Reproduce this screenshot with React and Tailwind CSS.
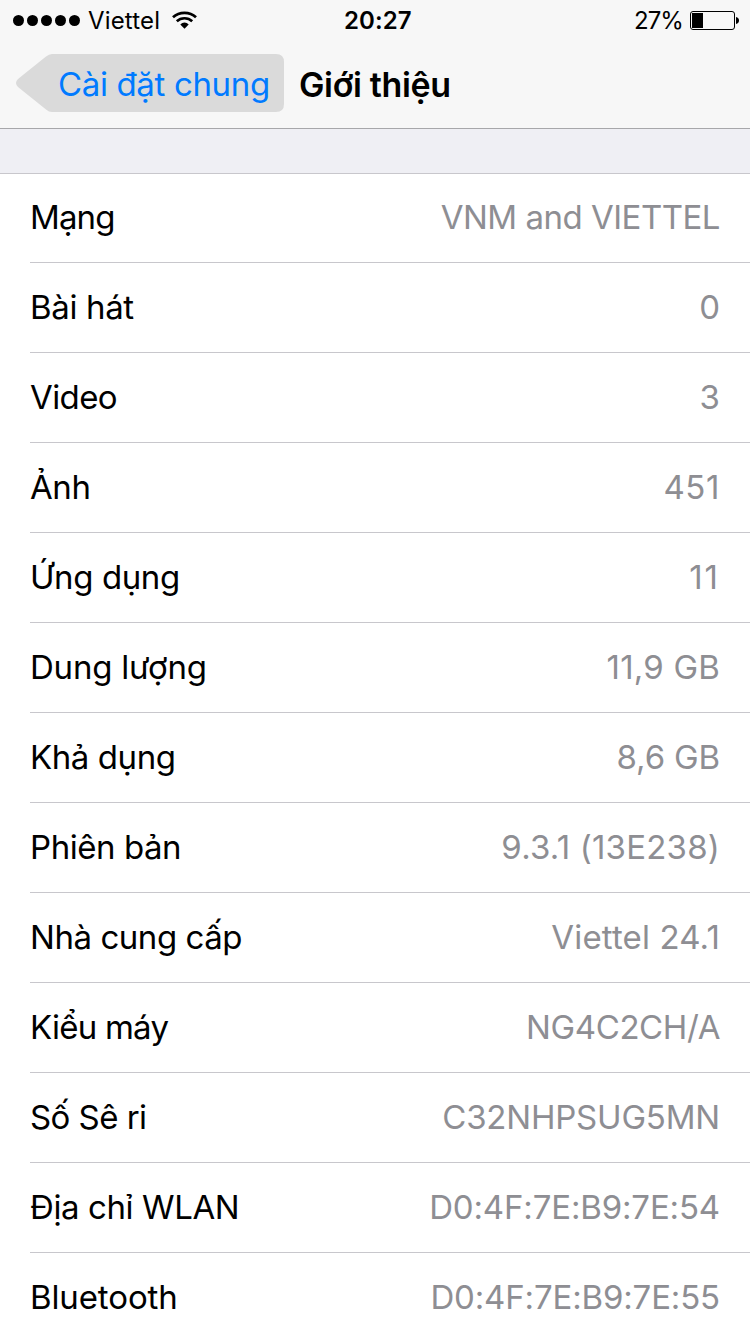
import React from 'react';

// letter spacing is tuned per row, the widths of Inter differ a little
const rows = [
  { label: 'Mạng', value: 'VNM and VIETTEL', labelSpacing: 'tracking-[-0.9px]', valueSpacing: 'tracking-[-0.5px]' },
  { label: 'Bài hát', value: '0', labelSpacing: 'tracking-[-0.35px]', valueSpacing: 'tracking-normal' },
  { label: 'Video', value: '3', labelSpacing: 'tracking-[-0.6px]', valueSpacing: 'tracking-normal' },
  { label: 'Ảnh', value: '451', labelSpacing: 'tracking-[-0.4px]', valueSpacing: 'tracking-[0.6px]' },
  { label: 'Ứng dụng', value: '11', labelSpacing: 'tracking-[-0.4px]', valueSpacing: 'tracking-[2px]' },
  { label: 'Dung lượng', value: '11,9 GB', labelSpacing: 'tracking-[-0.22px]', valueSpacing: 'tracking-[0.2px]' },
  { label: 'Khả dụng', value: '8,6 GB', labelSpacing: 'tracking-[-0.42px]', valueSpacing: 'tracking-[-0.15px]' },
  { label: 'Phiên bản', value: '9.3.1 (13E238)', labelSpacing: 'tracking-[-0.45px]', valueSpacing: 'tracking-[0.2px]' },
  { label: 'Nhà cung cấp', value: 'Viettel 24.1', labelSpacing: 'tracking-[-0.45px]', valueSpacing: 'tracking-[0.15px]' },
  { label: 'Kiểu máy', value: 'NG4C2CH/A', labelSpacing: 'tracking-[-0.75px]', valueSpacing: 'tracking-[-0.4px]' },
  { label: 'Số Sê ri', value: 'C32NHPSUG5MN', labelSpacing: 'tracking-[-0.55px]', valueSpacing: 'tracking-[-0.2px]' },
  { label: 'Địa chỉ WLAN', value: 'D0:4F:7E:B9:7E:54', labelSpacing: 'tracking-[-0.4px]', valueSpacing: 'tracking-[-0.15px]' },
  { label: 'Bluetooth', value: 'D0:4F:7E:B9:7E:55', labelSpacing: 'tracking-[-0.12px]', valueSpacing: 'tracking-[-0.15px]' },
];

const WifiIcon = () => (
  <svg className="ml-[12px]" width="25" height="18" viewBox="0 0 25 18" fill="none" stroke="#000">
    <path d="M1 6.3C7.3 .3 17.7 .3 24 6.3" strokeWidth="2.7" />
    <path d="M4.8 10.3C9 6.2 16 6.2 20.2 10.3" strokeWidth="2.6" />
    <path d="M8.3 13.5C10.7 10.7 14.3 10.7 16.7 13.5L12.5 17.7Z" fill="#000" stroke="none" />
  </svg>
);

const BatteryIcon = () => (
  <svg className="ml-[7px]" width="50" height="20" viewBox="0 0 50 20">
    <rect x="0.5" y="1.5" width="44" height="18" rx="2.5" fill="none" stroke="#000" />
    <rect x="2" y="3" width="11" height="15" fill="#000" />
    <path d="M46 7C50 7.8 50 13.2 46 14Z" fill="#000" />
  </svg>
);

const StatusBar = () => (
  <div className="grid h-10 grid-cols-3 items-center text-[24px] leading-[38px]">
    <div className="flex items-center pl-[13px]">
      <div className="flex gap-[3px]">
        {[1, 2, 3, 4, 5].map((n) => (
          <span key={n} className="h-[11px] w-[11px] rounded-full bg-black" />
        ))}
      </div>
      <span className="ml-[8px] pt-[2px] tracking-[0.15px]">Viettel</span>
      <WifiIcon />
    </div>
    <div className="pl-[94px] pt-[2px] font-semibold tracking-[0.1px]">20:27</div>
    <div className="flex items-center justify-end pr-[10px]">
      <span className="pt-[2px] tracking-[-0.9px]">27%</span>
      <BatteryIcon />
    </div>
  </div>
);

const NavBar = () => (
  <div className="flex h-[86px] items-center pl-4">
    <button className="relative h-[58px] w-[268px] pl-[42px] text-left text-[33px] leading-[60px] tracking-[-0.35px] text-[#007aff]">
      <svg className="absolute left-0 top-0" width="268" height="58" viewBox="0 0 268 58">
        <path
          d="M36 0H260Q268 0 268 8V50Q268 58 260 58H36Q33 58 30 55.5L2 33Q-2 29 2 25L30 2.5Q33 0 36 0Z"
          fill="#dadada"
        />
      </svg>
      <span className="relative whitespace-nowrap">Cài đặt chung</span>
    </button>
    <h1 className="ml-[15px] whitespace-nowrap pt-[2px] text-[34px] font-semibold tracking-[-0.35px]">
      Giới thiệu
    </h1>
  </div>
);

const App = () => {
  return (
    <div className="h-[1334px] w-[750px] overflow-hidden bg-white font-['Inter','Noto_Sans',sans-serif] text-black">
      <header className="h-[129px] border-b border-[#a7a7aa] bg-[#f7f7f7]">
        <StatusBar />
        <NavBar />
      </header>
      <div className="h-[45px] border-b border-[#c8c7cc] bg-[#efeff4]" />
      <ul className="pl-[30px]">
        {rows.map((row) => (
          <li
            key={row.label}
            className="flex h-[90px] items-end justify-between border-b border-[#c8c7cc] pr-[30px] text-[33px] leading-[89px] first:h-[89px]"
          >
            <span className={row.labelSpacing}>{row.label}</span>
            <span className={`text-[#8e8e93] ${row.valueSpacing}`}>{row.value}</span>
          </li>
        ))}
      </ul>
    </div>
  );
};

export default App;
